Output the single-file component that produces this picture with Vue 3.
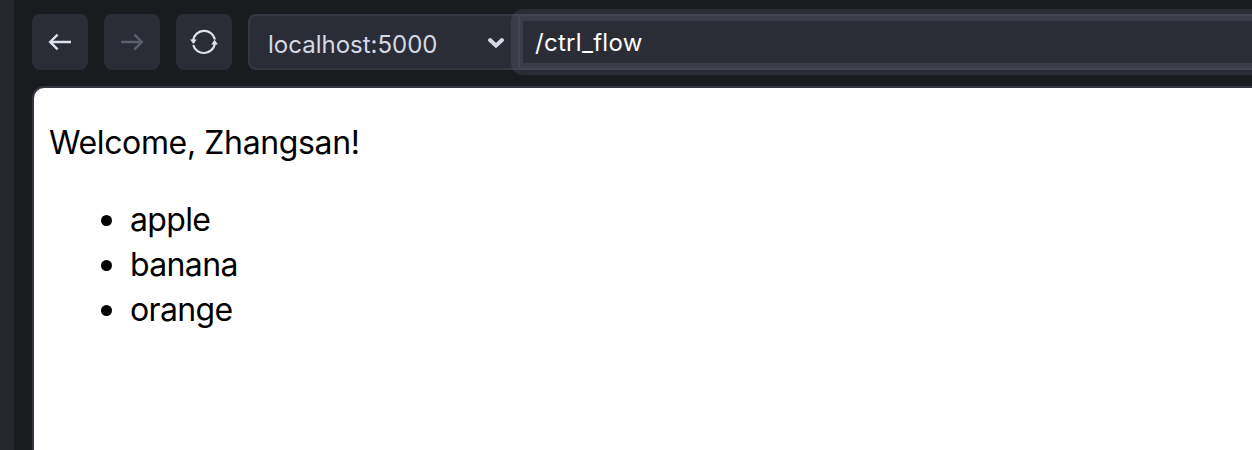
<script setup>
const fruits = ['apple', 'banana', 'orange']
</script>

<template>
  <div class="window">
    <aside class="gutter"></aside>
    <main class="browser">
      <nav class="toolbar">
        <button class="btn" aria-label="Back">
          <svg width="24" height="24" viewBox="0 0 24 24"><path d="M23 12H2M9.6 4.6L2.2 12l7.4 7.4" /></svg>
        </button>
        <button class="btn disabled" aria-label="Forward">
          <svg width="24" height="24" viewBox="0 0 24 24"><path d="M1 12H22M14.4 4.6l7.4 7.4-7.4 7.4" /></svg>
        </button>
        <button class="btn" aria-label="Reload">
          <svg class="reload" width="28" height="28" viewBox="0 0 28 28">
            <path d="M3.1 12.2A11.2 11.2 0 0 1 25 11.4M24.9 15.8A11.2 11.2 0 0 1 3.2 17.2" />
            <path class="tip" d="M0 11.4h6.6L3.5 16zM21.3 16.6h6.6l-3.3-4.8z" />
          </svg>
        </button>
        <div class="address">
          <div class="host">
            <span class="host-name">localhost:5000</span>
            <svg class="chevron" width="18" height="14" viewBox="0 0 18 14"><path d="M3 4l6 5.6L15 4" /></svg>
          </div>
          <div class="path"><span class="path-text">/ctrl_flow</span></div>
        </div>
      </nav>
      <section class="page">
        <p>Welcome, Zhangsan!</p>
        <ul>
          <li v-for="fruit in fruits" :key="fruit">{{ fruit }}</li>
        </ul>
      </section>
    </main>
  </div>
</template>

<style>
body { background: #1a1b1f; overflow: hidden; }
</style>

<style scoped>
.window {
  display: flex;
  width: 100vw;
  height: 100vh;
  overflow: hidden;
  background: #1a1b1f;
  font-family: Inter, "Liberation Sans", sans-serif;
}
.gutter { flex: none; width: 14px; background: #25262b; }
.browser {
  flex: 1;
  min-width: 0;
  display: flex;
  flex-direction: column;
  gap: 16px;
  padding: 14px 0 0 18px;
}
.toolbar { display: flex; gap: 16px; height: 56px; flex: none; }
.btn {
  flex: none;
  display: flex;
  align-items: center;
  justify-content: center;
  width: 56px;
  height: 56px;
  padding: 0;
  border: 0;
  border-radius: 8px;
  background: #2a2d35;
  color: #dde1ec;
}
.btn.disabled { color: #5a5e6d; }
svg { fill: none; stroke: currentColor; stroke-width: 2.4; }
.reload { stroke-width: 2.2; }
.tip { fill: currentColor; stroke: none; }
.address {
  flex: 1;
  display: flex;
  box-sizing: border-box;
  border: 2px solid #333741;
  border-right: 0;
  border-radius: 8px 0 0 8px;
  background: #2a2d35;
}
.host {
  flex: none;
  display: flex;
  align-items: center;
  justify-content: space-between;
  box-sizing: border-box;
  width: 270px;
  padding: 4px 13px 0 18px;
  border-right: 2px solid #333741;
  color: #d5d9e4;
  font-size: 24px;
}
.chevron { stroke-width: 4; stroke-linecap: round; margin-top: -3px; }
.path {
  position: relative;
  flex: 1;
  display: flex;
  align-items: center;
  padding-left: 15px;
  color: #fff;
  font-size: 24px;
  letter-spacing: 0.3px;
}
.path::after {
  content: "";
  position: absolute;
  top: -7px;
  bottom: -7px;
  left: -9px;
  right: -14px;
  border: 12px solid rgba(178, 170, 205, 0.12);
  border-radius: 12px;
}
.page {
  flex: 1;
  border: 2px solid #333540;
  border-width: 2px 0 0 2px;
  border-radius: 12px 0 0 0;
  padding: 32px 16px 0;
  background: #fff;
  color: #000;
  font-size: 32px;
  line-height: 45px;
}
p { margin: 0 0 32px -1px; letter-spacing: -0.37px; }
ul { margin: 0; padding-left: 51px; list-style: none; letter-spacing: -0.65px; }
li { display: flex; align-items: center; gap: 18px; }
li::before {
  content: "";
  width: 11px;
  height: 11px;
  margin-top: 2px;
  border-radius: 50%;
  background: #000;
}
</style>
